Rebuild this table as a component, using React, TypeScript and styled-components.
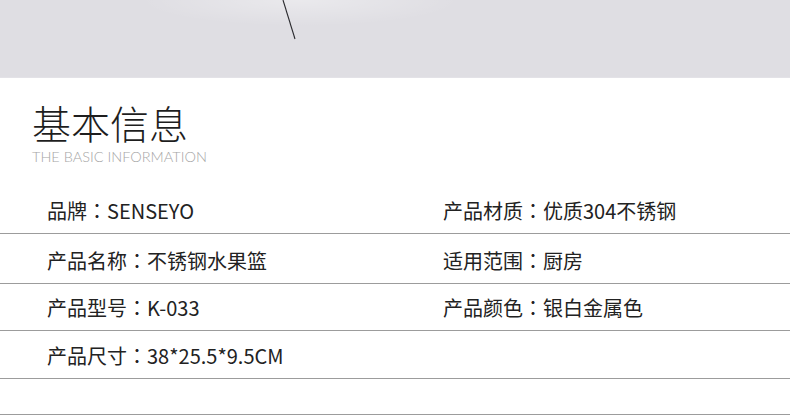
import React from 'react';
import styled, { createGlobalStyle } from 'styled-components';

const GlobalStyle = createGlobalStyle`
  html, body {
    margin: 0;
    padding: 0;
    background: #fff;
  }
  body {
    font-family: 'Noto Sans CJK SC', 'Noto Sans', sans-serif;
  }
`;

const Page = styled.div`
  width: 790px;
  height: 416px;
  overflow: hidden;
  background: #fff;
`;

const Banner = styled.div`
  height: 78px;
  background:
    radial-gradient(ellipse 160px 26px at 300px 0px, rgba(255, 255, 255, 0.35), transparent),
    #dfdee3;
  border-bottom: 1px solid #e3e2e7;
  box-sizing: border-box;
`;

const Stroke = styled.svg`
  display: block;
  margin-left: 282px;
`;

const Heading = styled.div`
  padding: 21px 0 0 32px;
  height: 108px;
  box-sizing: border-box;
`;

const Title = styled.h1`
  margin: 0;
  font-family: 'Noto Sans CJK SC', sans-serif;
  font-size: 39px;
  font-weight: 300;
  line-height: 46px;
  color: #1e1e1e;
`;

const Subtitle = styled.div`
  margin-top: 3px;
  font-family: Lato, 'Open Sans', sans-serif;
  font-size: 14.5px;
  font-weight: 300;
  line-height: 18px;
  color: #a6a6a6;
`;

const Table = styled.div`
  display: flex;
  flex-direction: column;
`;

const Row = styled.div<{ $h: number }>`
  display: grid;
  grid-template-columns: 396px 1fr;
  align-items: end;
  height: ${(p) => p.$h}px;
  padding: 0 0 11px 47px;
  box-sizing: border-box;
  border-bottom: 1px solid #9c9c9c;
`;

const Cell = styled.div`
  font-family: 'Noto Sans CJK SC', sans-serif;
  font-size: 20px;
  line-height: 22px;
  color: #222;
  white-space: nowrap;
`;

const Colon = styled.span`
  font-family: 'Noto Sans CJK TC', 'Noto Sans CJK SC', sans-serif;
`;

const rows: { h: number; cells: [string, string][] }[] = [
  { h: 48, cells: [['品牌', 'SENSEYO'], ['产品材质', '优质304不锈钢']] },
  { h: 50, cells: [['产品名称', '不锈钢水果篮'], ['适用范围', '厨房']] },
  { h: 47, cells: [['产品型号', 'K-033'], ['产品颜色', '银白金属色']] },
  { h: 48, cells: [['产品尺寸', '38*25.5*9.5CM']] },
  { h: 36, cells: [] },
];

const App: React.FC = () => {
  return (
    <>
      <GlobalStyle />
      <Page>
        <Banner>
          <Stroke width="16" height="42" viewBox="0 0 16 42">
            <line x1="1" y1="0" x2="13" y2="39" stroke="#2a2a2e" strokeWidth="1.1" />
          </Stroke>
        </Banner>
        <Heading>
          <Title>基本信息</Title>
          <Subtitle>THE BASIC INFORMATION</Subtitle>
        </Heading>
        <Table>
          {rows.map((r, i) => (
            <Row key={i} $h={r.h}>
              {r.cells.map(([label, value], j) => (
                <Cell key={j}>
                  {label}
                  <Colon>：</Colon>
                  {value}
                </Cell>
              ))}
            </Row>
          ))}
        </Table>
      </Page>
    </>
  );
};

export default App;
